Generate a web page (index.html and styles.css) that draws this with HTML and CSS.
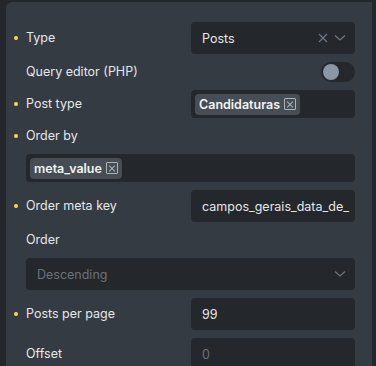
FILE: index.html
```html
<!DOCTYPE html>
<html lang="en">

<head>
    <meta charset="UTF-8">
    <meta name="viewport" content="width=device-width, initial-scale=1.0">
    <title>Query</title>
    <link rel="stylesheet" href="styles.css">
</head>

<body>

    <!-- 패널 영역 -->
    <div class="panel">

        <div class="row">
            <div class="label required">Type</div>
            <div class="control select">
                <span class="value">Posts</span>
                <span class="icons">
                    <svg width="10" height="10" viewBox="0 0 10 10"><path d="M1 1L9 9M9 1L1 9" stroke="#6f7780" stroke-width="1.2" fill="none"/></svg>
                    <svg width="12" height="8" viewBox="0 0 12 8"><path d="M1 1.5L6 6L11 1.5" stroke="#6f7780" stroke-width="1.2" fill="none"/></svg>
                </span>
            </div>
        </div>

        <div class="row">
            <div class="label">Query editor (PHP)</div>
            <div class="toggle_wrap">
                <div class="toggle"><span class="knob"></span></div>
            </div>
        </div>

        <div class="row">
            <div class="label required">Post type</div>
            <div class="control tags">
                <span class="tag">Candidaturas <i class="tag_x"></i></span>
            </div>
        </div>

        <div class="label required label_row">Order by</div>
        <div class="control tags wide">
            <span class="tag">meta_value <i class="tag_x"></i></span>
        </div>

        <div class="row">
            <div class="label required">Order meta key</div>
            <div class="control input">campos_gerais_data_de_</div>
        </div>

        <div class="label label_row">Order</div>
        <div class="control select wide">
            <span class="value placeholder">Descending</span>
            <span class="icons">
                <svg width="12" height="8" viewBox="0 0 12 8"><path d="M1 1.5L6 6L11 1.5" stroke="#6f7780" stroke-width="1.2" fill="none"/></svg>
            </span>
        </div>

        <div class="row">
            <div class="label required">Posts per page</div>
            <div class="control input">99</div>
        </div>

        <div class="row">
            <div class="label">Offset</div>
            <div class="control input placeholder">0</div>
        </div>

    </div>

</body>

</html>
```

FILE: styles.css
```css
* {
    box-sizing: border-box;
}

body {
    margin: 0;
    height: 366px;
    overflow: hidden;
    background-color: #23272b;
    font-family: Inter, "Noto Sans", sans-serif;
    font-size: 12.5px;
    color: #e4e7ea;
}

.panel {
    margin: 2px 4px 0 6px;
    height: 370px;
    background-color: #353b42;
    border-top-left-radius: 6px;
    padding: 20px 17px 0 20px;
    display: flex;
    flex-direction: column;
    gap: 8px;
}

.row {
    display: grid;
    grid-template-columns: 1fr 164px;
    column-gap: 8px;
    align-items: center;
}

.label {
    position: relative;
    line-height: 20px;
    white-space: nowrap;
}

/* 필수 표시 점 */
.required::before {
    content: "";
    position: absolute;
    left: -12px;
    top: 8px;
    width: 4px;
    height: 4px;
    border-radius: 50%;
    background-color: #ffd64f;
}

.control {
    background-color: #24282c;
    border-radius: 4px;
    height: 32px;
    display: flex;
    align-items: center;
    padding: 0 11px;
}

.wide {
    width: 100%;
}

.select {
    justify-content: space-between;
}

.icons {
    display: flex;
    align-items: center;
    gap: 6px;
    margin-right: -2px;
}

.placeholder {
    color: #6b7279;
}

.tags {
    height: 28px;
    padding: 0 4px;
}

.tag {
    display: inline-flex;
    align-items: center;
    gap: 4px;
    height: 21px;
    padding: 0 4px 0 4px;
    background-color: #464d55;
    border-radius: 4px;
    font-weight: 600;
    color: #f1f3f5;
}

.tag_x {
    position: relative;
    display: inline-block;
    width: 12px;
    height: 12px;
    border: 1px solid #aab2ba;
    border-radius: 1px;
}

.tag_x::before,
.tag_x::after {
    content: "";
    position: absolute;
    left: 1px;
    top: 4.5px;
    width: 8px;
    height: 1px;
    background-color: #aab2ba;
    transform: rotate(45deg);
}

.tag_x::after {
    transform: rotate(-45deg);
}

.toggle_wrap {
    display: flex;
    justify-content: flex-end;
}

.toggle {
    width: 34px;
    height: 20px;
    border-radius: 10px;
    background-color: #24282c;
    padding: 2px;
}

.knob {
    display: block;
    width: 16px;
    height: 16px;
    border-radius: 50%;
    background-color: #8b97a4;
}
```
